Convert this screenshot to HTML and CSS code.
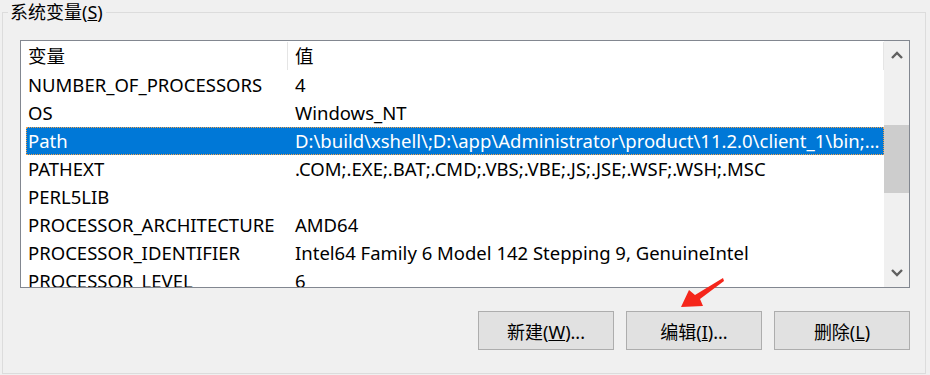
FILE: index.html
```html
<!DOCTYPE html>
<html lang="zh-CN">
<head>
<meta charset="UTF-8">
<meta name="viewport" content="width=device-width, initial-scale=1.0">
<title>系统变量</title>
<link rel="stylesheet" href="styles.css">
</head>
<body>
<fieldset class="group">
  <legend>系统变量(<u>S</u>)</legend>

  <div class="listbox">
    <div class="rows">
      <div class="head">
        <div class="hcell name">变量</div>
        <div class="hcell value">值</div>
      </div>
      <div class="row"><span class="name">NUMBER_OF_PROCESSORS</span><span class="value">4</span></div>
      <div class="row"><span class="name">OS</span><span class="value">Windows_NT</span></div>
      <div class="row selected"><span class="name">Path</span><span class="value">D:\build\xshell\;D:\app\Administrator\product\11.2.0\client_1\bin;...</span></div>
      <div class="row"><span class="name">PATHEXT</span><span class="value">.COM;.EXE;.BAT;.CMD;.VBS;.VBE;.JS;.JSE;.WSF;.WSH;.MSC</span></div>
      <div class="row"><span class="name">PERL5LIB</span><span class="value"></span></div>
      <div class="row"><span class="name">PROCESSOR_ARCHITECTURE</span><span class="value">AMD64</span></div>
      <div class="row"><span class="name">PROCESSOR_IDENTIFIER</span><span class="value">Intel64 Family 6 Model 142 Stepping 9, GenuineIntel</span></div>
      <div class="row"><span class="name">PROCESSOR_LEVEL</span><span class="value">6</span></div>
    </div>

    <!-- vertical scrollbar -->
    <div class="scrollbar">
      <div class="sbtn">
        <svg width="12" height="8" viewBox="0 0 12 8"><polyline points="1,7 6,2 11,7" fill="none" stroke="#606060" stroke-width="2.4"/></svg>
      </div>
      <div class="track"><div class="thumb"></div></div>
      <div class="sbtn">
        <svg width="12" height="8" viewBox="0 0 12 8"><polyline points="1,1 6,6 11,1" fill="none" stroke="#606060" stroke-width="2.4"/></svg>
      </div>
    </div>
  </div>

  <div class="buttons">
    <button>新建(<u>W</u>)...</button>
    <button>编辑(<u>I</u>)...</button>
    <button>删除(<u>L</u>)</button>
  </div>
</fieldset>

<!-- red pointer drawn on top of the screenshot -->
<svg class="pointer" width="60" height="40" viewBox="0 0 60 40">
  <polygon points="53,6 54,9 30,27 33,34 11,35 19,18 25,23" fill="#f5261b"/>
</svg>
</body>
</html>
```

FILE: styles.css
```css
/* dialog look */
body {
  font-family: "Noto Sans", "Noto Sans CJK SC", sans-serif;
  font-size: 18.5px;
  color: #000;
  background-color: #f0f0f0;
  margin: 0;
  padding: 0 0 0 2px;
  position: relative;
  width: 930px;
  height: 375px;
  overflow: hidden;
}

.group {
  margin: 0;
  width: 924px;
  height: 374px;
  box-sizing: border-box;
  border: 1px solid #dcdcdc;
  padding: 16px 0 0 17px;
}

.group legend {
  margin-left: -12px;
  padding: 0 3px 0 2px;
  line-height: 24px;
  height: 24px;
  font-size: 18px;
}

.listbox {
  display: flex;
  width: 890px;
  height: 248px;
  box-sizing: border-box;
  border: 1px solid #828790;
  background-color: #fff;
  overflow: hidden;
}

.rows {
  flex: 1;
  overflow: hidden;
}

.head {
  display: flex;
  height: 30px;
  align-items: center;
}

.hcell {
  height: 28px;
  line-height: 28px;
  padding-left: 7px;
}

.hcell.name {
  width: 259px;
  border-right: 1px solid #e5e5e5;
}

.hcell.value {
  flex: 1;
  border-right: 1px solid #e5e5e5;
}

.row {
  display: flex;
  height: 28px;
  line-height: 28px;
  margin-left: 5px;
  white-space: nowrap;
}

.row .name {
  width: 260px;
  padding-left: 2px;
}

.row .value {
  flex: 1;
  min-width: 0;
  padding-left: 7px;
  overflow: hidden;
}

.row.selected {
  background-color: #0078d7;
  color: #fff;
  outline: 1px dotted #f5a34b;
  outline-offset: -1px;
}

.scrollbar {
  width: 25px;
  display: flex;
  flex-direction: column;
  background-color: #f0f0f0;
}

.sbtn {
  height: 28px;
  display: flex;
  align-items: center;
  justify-content: center;
}

.track {
  flex: 1;
  padding-top: 56px;
}

.thumb {
  height: 68px;
  background-color: #cdcdcd;
}

.buttons {
  display: flex;
  justify-content: flex-end;
  gap: 12px;
  width: 890px;
  margin-top: 23px;
}

.buttons button {
  width: 136px;
  height: 39px;
  font-family: inherit;
  font-size: 18px;
  color: #000;
  background-color: #e1e1e1;
  border: 1px solid #adadad;
  padding: 0;
}

.pointer {
  position: absolute;
  left: 670px;
  top: 272px;
}
```
